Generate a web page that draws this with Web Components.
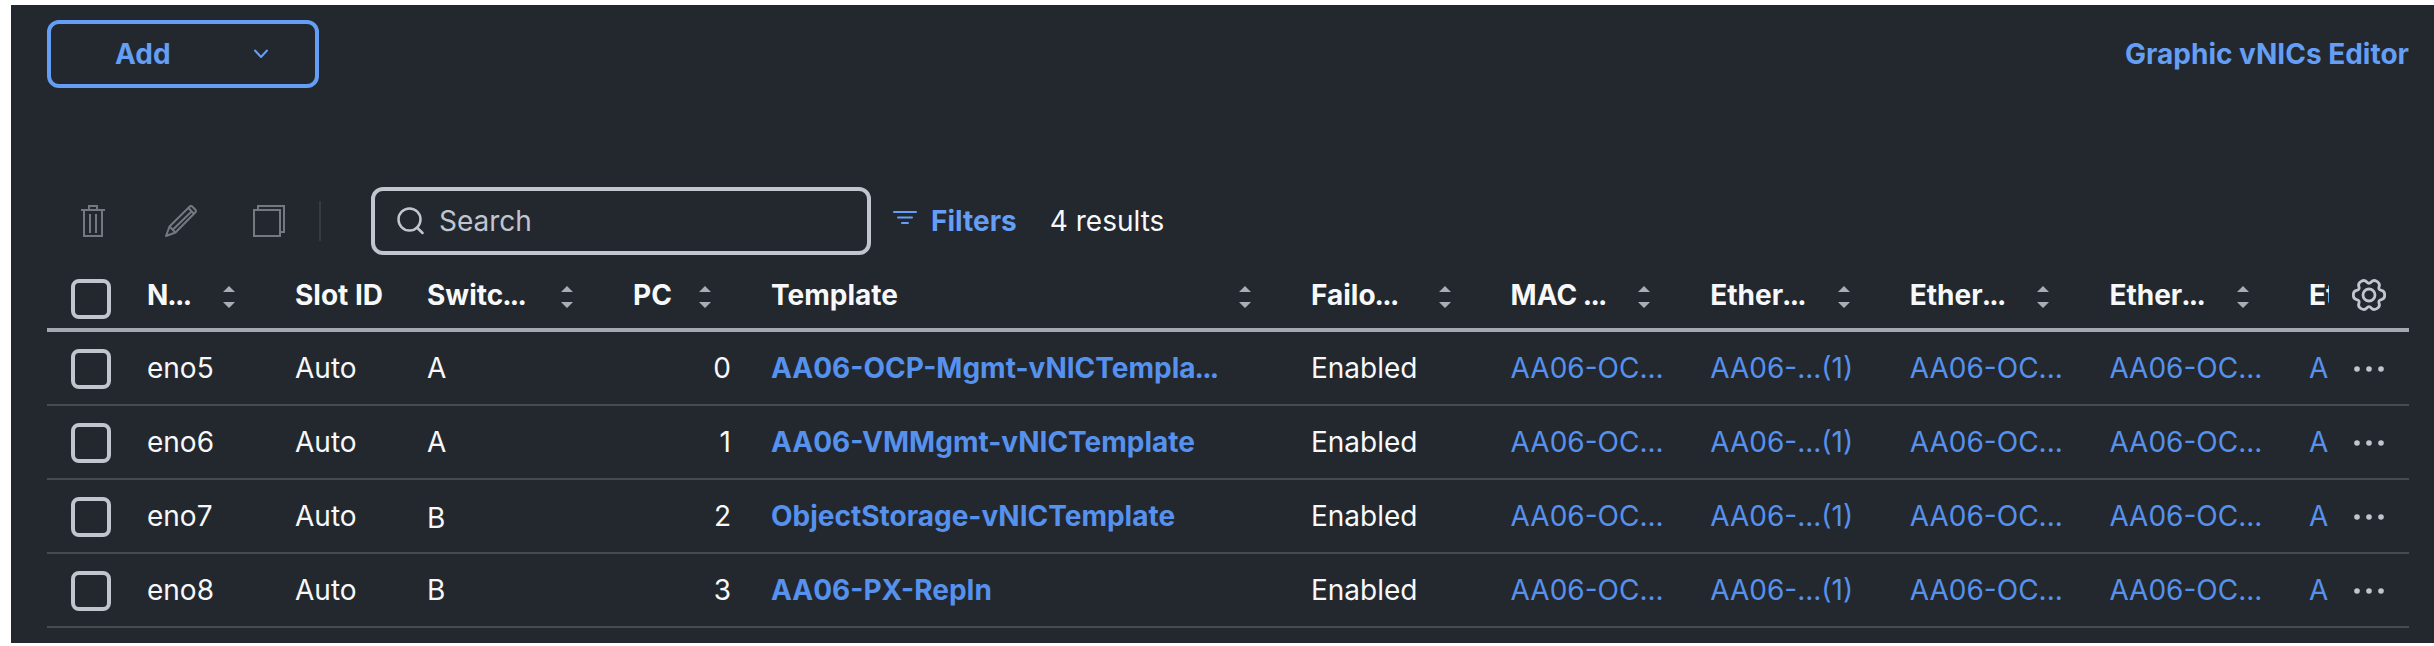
<!DOCTYPE html>
<html lang="en">
<head>
<meta charset="UTF-8">
<title>vNICs</title>
<style>
    body { margin: 0; background: #fff; font-family: Inter, "Liberation Sans", sans-serif; font-size: 28px; color: #f7f8fa; }
</style>
</head>
<body>
<vnic-page>
    <add-button slot="top">Add</add-button>
    <text-link slot="top">Graphic vNICs Editor</text-link>
    <table-toolbar slot="toolbar" results="4"></table-toolbar>
    <vnic-table slot="table"></vnic-table>
</vnic-page>

<script>
const COLUMNS = [
    { title: 'N...', sort: true },
    { title: 'Slot ID' },
    { title: 'Switc...', sort: true },
    { title: 'PC', sort: true, align: 'right' },
    { title: 'Template', sort: true, link: 'bold' },
    { title: 'Failo...', sort: true },
    { title: 'MAC ...', sort: true, link: 'normal' },
    { title: 'Ether...', sort: true, link: 'normal' },
    { title: 'Ether...', sort: true, link: 'normal' },
    { title: 'Ether...', sort: true, link: 'normal' },
    { title: 'Et', link: 'normal' }
];

const POOLS = ['Enabled', 'AA06-OC...', 'AA06-...(1)', 'AA06-OC...', 'AA06-OC...', 'A'];

const ROWS = [
    ['eno5', 'Auto', 'A', '0', 'AA06-OCP-Mgmt-vNICTempla...', ...POOLS],
    ['eno6', 'Auto', 'A', '1', 'AA06-VMMgmt-vNICTemplate', ...POOLS],
    ['eno7', 'Auto', 'B', '2', 'ObjectStorage-vNICTemplate', ...POOLS],
    ['eno8', 'Auto', 'B', '3', 'AA06-PX-RepIn', ...POOLS]
];

// bold dots are set tighter than the text
const tightDots = text => text.replace('...', '<span class="dots3">...</span>');

// six rounded teeth around (cx, cy)
function gearPath(cx, cy) {
    const points = [];
    for (let i = 0; i < 6; i++) {
        [[-14, 16.2], [14, 16.2], [30, 10.4]].forEach(([deg, r]) => {
            const a = (i * 60 + deg) * Math.PI / 180;
            points.push([cx + r * Math.cos(a), cy + r * Math.sin(a)]);
        });
    }
    const mid = (p, q) => `${((p[0] + q[0]) / 2).toFixed(2)} ${((p[1] + q[1]) / 2).toFixed(2)}`;
    const last = points[points.length - 1];
    return `M${mid(last, points[0])}` + points.map((p, i) =>
        `Q${p[0].toFixed(2)} ${p[1].toFixed(2)} ${mid(p, points[(i + 1) % points.length])}`).join('') + 'Z';
}

class VnicPage extends HTMLElement {
    constructor() {
        super();
        this.attachShadow({ mode: 'open' }).innerHTML = `
            <style>
                :host { display: block; box-sizing: border-box; height: 638px; margin: 5px 0 0 11px; padding: 15px 25px 0 36px; background: #23282e; overflow: hidden; }
                .top { display: flex; justify-content: space-between; align-items: center; height: 68px; margin-bottom: 99px; }
            </style>
            <div class="top"><slot name="top"></slot></div>
            <slot name="toolbar"></slot>
            <slot name="table"></slot>
        `;
    }
}

class AddButton extends HTMLElement {
    constructor() {
        super();
        this.attachShadow({ mode: 'open' }).innerHTML = `
            <style>
                :host { display: flex; align-items: center; justify-content: space-between; box-sizing: border-box; width: 272px; height: 68px; padding: 0 46px 0 64px; border: 4px solid #649ef5; border-radius: 12px; color: #649ef5; font-weight: 700; }
                svg { display: block; }
            </style>
            <slot></slot>
            <svg width="16" height="12" viewBox="0 0 16 12" fill="none" stroke="currentColor" stroke-width="2" stroke-linecap="round" stroke-linejoin="round"><path d="M2 2.5l6 6.5 6-6.5"/></svg>
        `;
    }
}

class TextLink extends HTMLElement {
    constructor() {
        super();
        this.attachShadow({ mode: 'open' }).innerHTML = `
            <style>
                :host { display: block; color: #649ef5; font-weight: 700; white-space: nowrap; }
            </style>
            <slot></slot>
        `;
    }
}

class TableToolbar extends HTMLElement {
    constructor() {
        super();
        this.attachShadow({ mode: 'open' });
    }

    connectedCallback() {
        this.shadowRoot.innerHTML = `
            <style>
                :host { display: flex; align-items: center; height: 68px; }
                svg { display: block; flex: none; }
                .actions { display: flex; align-items: center; width: 324px; color: #747981; }
                .trash { margin-left: 34px; }
                .pencil { margin-left: 60px; }
                .copy { margin-left: 56px; }
                .divider { width: 2px; height: 40px; margin-left: 34px; background: #363b42; }
                .search { display: flex; align-items: center; gap: 15px; box-sizing: border-box; width: 500px; height: 68px; padding-left: 22px; border: 4px solid #c1c6ce; border-radius: 12px; color: #c1c6ce; }
                .filter { margin: -7px 14px 0 22px; color: #649ef5; }
                text-link { margin-right: 33px; }
                .results { white-space: nowrap; }
            </style>
            <div class="actions">
                <svg class="trash" width="24" height="32" viewBox="0 0 24 32" fill="none" stroke="currentColor" stroke-width="2"><path d="M0 5h24M8 5V1h8v4M3 5v26h18V5M9 9v19M15 9v19"/></svg>
                <svg class="pencil" width="32" height="32" viewBox="0 0 32 32" fill="none" stroke="currentColor" stroke-width="2" stroke-linejoin="round"><path d="M1 31l3.5-9.5L24.5 1.8q1.5-1.5 3 0l2.7 2.7q1.5 1.5 0 3L10.5 27.5zM4.5 21.5l6 6M8 24.5L26 7M23.5 3l5.5 6"/></svg>
                <svg class="copy" width="32" height="32" viewBox="0 0 32 32" fill="none" stroke="currentColor" stroke-width="2"><path d="M1 5h26v26H1zM5 5V1h26v26h-4"/></svg>
                <span class="divider"></span>
            </div>
            <div class="search">
                <svg width="27" height="28" viewBox="0 0 27 28" fill="none" stroke="currentColor" stroke-width="2.5" stroke-linecap="round"><circle cx="12.5" cy="12.5" r="11"/><path d="M20 20.5l5.5 5.5"/></svg>
                <span>Search</span>
            </div>
            <svg class="filter" width="24" height="13" viewBox="0 0 24 13" stroke="currentColor" stroke-width="2" stroke-linecap="round"><path d="M1 1h22M5 6.5h14M9 12h6"/></svg>
            <text-link>Filters</text-link>
            <span class="results">${this.getAttribute('results')} results</span>
        `;
    }
}

class CheckBox extends HTMLElement {
    constructor() {
        super();
        this.attachShadow({ mode: 'open' }).innerHTML = `
            <style>
                :host { display: block; box-sizing: border-box; width: 40px; height: 40px; border: 4px solid #c1c6ce; border-radius: 8px; }
            </style>
        `;
    }
}

class SortArrows extends HTMLElement {
    constructor() {
        super();
        this.attachShadow({ mode: 'open' }).innerHTML = `
            <style>
                :host { display: block; flex: none; color: #a9aeb6; }
                svg { display: block; }
            </style>
            <svg width="12" height="22" viewBox="0 0 12 22" fill="currentColor"><path d="M0 6l6-6 6 6zM0 16h12l-6 6z"/></svg>
        `;
    }
}

class VnicTable extends HTMLElement {
    constructor() {
        super();
        this.attachShadow({ mode: 'open' });
    }

    connectedCallback() {
        this.render();
    }

    render() {
        this.shadowRoot.innerHTML = `
            <style>
                :host { display: block; margin-top: 7px; }
                .row { display: grid; grid-template-columns: 99px 148px 132px 206px 138px 540px 199.6px 199.6px 199.6px 199.6px 199.6px 21px 1fr; align-items: center; box-sizing: border-box; height: 74px; border-bottom: 2px solid #464b52; }
                .head { height: 70px; border-bottom: 4px solid #a2a9b1; font-weight: 700; }
                .cell { display: flex; align-items: center; padding-left: 1px; overflow: hidden; white-space: nowrap; }
                .cell.sort { justify-content: space-between; padding-right: 59px; }
                .cell.right { justify-content: flex-end; padding-right: 39px; }
                .head .cell { height: 40px; margin-top: -1px; }
                .head .cell.right { justify-content: space-between; padding-right: 59px; }
                .row:nth-of-type(4) .cell:nth-of-type(3) { margin-top: 4px; }
                .link { color: #5691ed; }
                .bold { font-weight: 700; }
                .dots3 { margin-left: -1px; letter-spacing: -1.7px; }
                check-box { margin: 2px 0 0 24px; }
                .head check-box { margin-top: 7px; }
                sort-arrows { margin-top: 5px; }
                .row svg { display: block; justify-self: end; margin-right: 23px; color: #c1c6ce; }
                .row .menu { margin: 2px 25px 0 0; }
                .head svg { margin-top: -1px; }
            </style>
            <div class="row head">
                <check-box></check-box>
                ${COLUMNS.map(c => `<div class="cell ${c.sort ? 'sort' : ''} ${c.align || ''}"><span>${tightDots(c.title)}</span>${c.sort ? '<sort-arrows></sort-arrows>' : ''}</div>`).join('')}
                <svg width="34" height="36" viewBox="0 0 34 36" fill="none" stroke="currentColor" stroke-width="2.8" stroke-linejoin="round"><path d="${gearPath(17, 18)}"/><circle cx="17" cy="18" r="6"/></svg>
            </div>
        `;

        ROWS.forEach(values => {
            const row = document.createElement('div');
            row.className = 'row';
            row.innerHTML = `
                <check-box></check-box>
                ${values.map((value, i) => {
                    const { align, link } = COLUMNS[i];
                    const text = link === 'bold' ? tightDots(value) : value;
                    return `<div class="cell ${align || ''} ${link ? 'link ' + link : ''}"><span>${text}</span></div>`;
                }).join('')}
                <svg class="menu" width="30" height="6" viewBox="0 0 30 6" fill="currentColor"><circle cx="3" cy="3" r="2.8"/><circle cx="15" cy="3" r="2.8"/><circle cx="27" cy="3" r="2.8"/></svg>
            `;
            this.shadowRoot.appendChild(row);
        });
    }
}

customElements.define('vnic-page', VnicPage);
customElements.define('add-button', AddButton);
customElements.define('text-link', TextLink);
customElements.define('table-toolbar', TableToolbar);
customElements.define('check-box', CheckBox);
customElements.define('sort-arrows', SortArrows);
customElements.define('vnic-table', VnicTable);
</script>
</body>
</html>
